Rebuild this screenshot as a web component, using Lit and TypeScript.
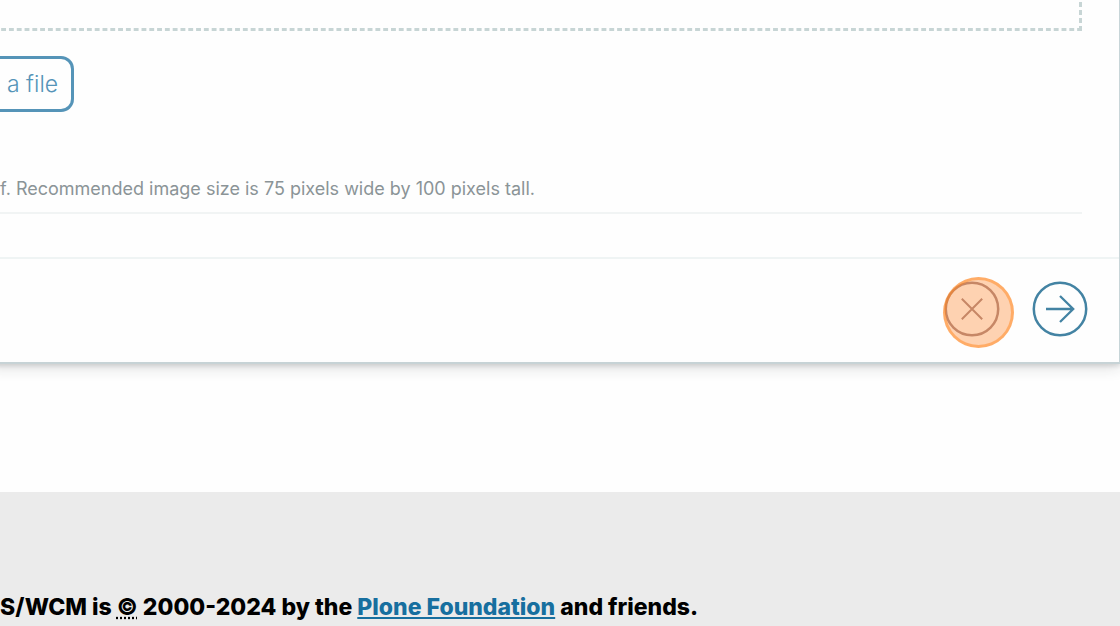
import { LitElement, html, css } from "lit";
import { customElement } from "lit/decorators.js";

@customElement("app-root")
export class AppRoot extends LitElement {
  static styles = css`
    :host {
      display: flex;
      flex-direction: column;
      min-height: 100vh;
      overflow: hidden;
      box-sizing: border-box;
      background: #fefefe;
      font-family: Inter, sans-serif;
    }
    .panel {
      margin-left: -12px;
      padding-left: 12px;
      background: #fefefe;
      border-right: 1px solid #c7d5d8;
      border-bottom: 2px solid #c7d3d6;
      box-shadow: 0 2px 4px rgba(34, 36, 38, 0.12), 0 3px 14px rgba(34, 36, 38, 0.16);
    }
    .field {
      margin-right: 37px;
      border-bottom: 2px solid #f1f4f4;
    }
    .dropzone {
      --dash: #c7d5d5;
      height: 31px;
      background-image:
        linear-gradient(to right, transparent 33%, var(--dash) 33%),
        linear-gradient(to top, var(--dash) 67%, transparent 67%);
      background-size: calc(100% / 138.7) 3px, 3px 8px;
      background-position: right bottom, right bottom;
      background-repeat: repeat-x, repeat-y;
    }
    .browse {
      display: block;
      margin-top: 25px;
      height: 56px;
      padding: 0 13px 0 7px;
      border: 3px solid #5594b8;
      border-left: 0;
      border-radius: 0 13px 13px 0;
      background: transparent;
      color: #5594b8;
      font: 300 23px/48px Inter, sans-serif;
    }
    .help {
      margin: 65px 0 0;
      padding-bottom: 11px;
      color: #8b9497;
      font-size: 18px;
      font-weight: 400;
      line-height: 24px;
    }
    .actions {
      display: flex;
      justify-content: flex-end;
      gap: 32px;
      margin: 43px 0 0 -12px;
      padding: 22px 31px 25px 0;
      border-top: 2px solid #eff4f4;
    }
    .action {
      position: relative;
      width: 56px;
      height: 56px;
      padding: 0;
      border: 0;
      background: transparent;
      color: #4383a3;
    }
    .cancel {
      color: #a78888;
    }
    .icon {
      display: block;
      width: 56px;
      height: 56px;
      fill: none;
      stroke: currentColor;
    }
    .marker {
      position: absolute;
      top: -4px;
      left: -1px;
      box-sizing: border-box;
      width: 71px;
      height: 71px;
      border: 3px solid rgba(255, 133, 29, 0.5);
      border-radius: 50%;
      background: rgba(255, 133, 41, 0.36);
      pointer-events: none;
    }
    .footer {
      flex: 1;
      margin-top: 128px;
      padding-top: 99px;
      background: #ebebeb;
      color: #000;
    }
    .legal {
      margin: 0;
      font-size: 23px;
      font-weight: 800;
      line-height: 32px;
      white-space: nowrap;
    }
    .link {
      color: #176f9f;
      text-decoration: underline;
    }
  `;

  render() {
    return html`
      <main class="panel">
        <div class="field">
          <div class="dropzone"></div>
          <button class="browse" type="button">a file</button>
          <p class="help">f. Recommended image size is 75 pixels wide by 100 pixels tall.</p>
        </div>
        <div class="actions">
          <button class="action cancel" type="button" aria-label="Cancel">
            <svg class="icon" viewBox="0 0 56 56" aria-hidden="true">
              <circle cx="28" cy="28" r="26.2" stroke-width="2.5" />
              <path d="M17.8 17.8 38.2 38.2M38.2 17.8 17.8 38.2" stroke-width="2" />
            </svg>
            <span class="marker"></span>
          </button>
          <button class="action" type="button" aria-label="Save">
            <svg class="icon" viewBox="0 0 56 56" aria-hidden="true">
              <circle cx="28" cy="28" r="26.2" stroke-width="2.5" />
              <path d="M14 28H41M28 15 41.2 28 28 41" stroke-width="2.3" />
            </svg>
          </button>
        </div>
      </main>
      <footer class="footer">
        <p class="legal">S/WCM is <abbr title="Copyright">©</abbr> 2000-2024 by the <a class="link" href="#">Plone Foundation</a> and friends.</p>
      </footer>
    `;
  }
}
